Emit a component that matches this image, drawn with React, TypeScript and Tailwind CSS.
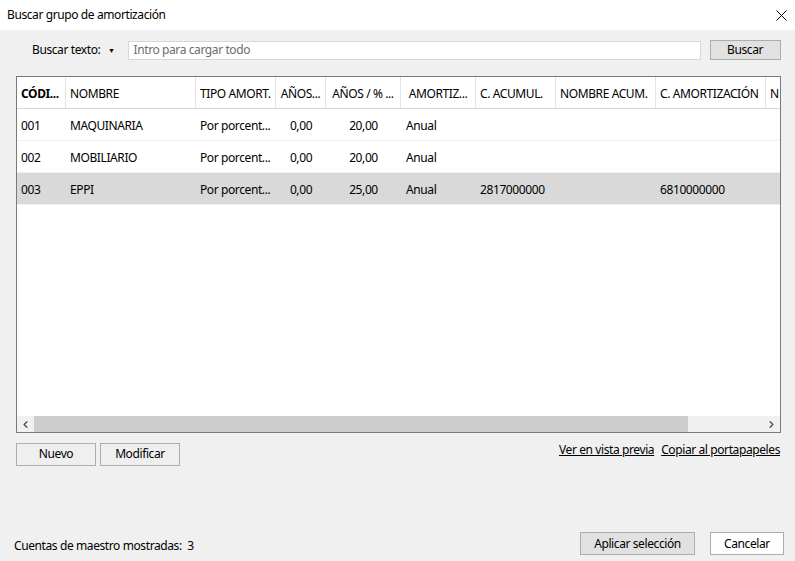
import { ChevronLeft, ChevronRight } from "lucide-react";

interface Column {
  label: string;
  width: number;
  bold?: boolean;
  align?: "left" | "center";
}

const columns: Column[] = [
  { label: "CÓDI...", width: 49, bold: true },
  { label: "NOMBRE", width: 130 },
  { label: "TIPO AMORT.", width: 80 },
  { label: "AÑOS...", width: 50, align: "center" },
  { label: "AÑOS / % ...", width: 75, align: "center" },
  { label: "AMORTIZ...", width: 75, align: "center" },
  { label: "C. ACUMUL.", width: 80 },
  { label: "NOMBRE ACUM.", width: 100 },
  { label: "C. AMORTIZACIÓN", width: 110 },
  { label: "N", width: 80 },
];

const rows = [
  ["001", "MAQUINARIA", "Por porcent...", "0,00", "20,00", "Anual", "", "", "", ""],
  ["002", "MOBILIARIO", "Por porcent...", "0,00", "20,00", "Anual", "", "", "", ""],
  ["003", "EPPI", "Por porcent...", "0,00", "25,00", "Anual", "2817000000", "", "6810000000", ""],
];

const font = { fontFamily: '"Noto Sans", "Segoe UI", sans-serif' };

function App() {
  return (
    <div
      className="w-[795px] h-[561px] flex flex-col bg-[#f0f0f0] text-[12px] text-black overflow-hidden whitespace-nowrap tracking-[-0.4px]"
      style={font}
    >
      {/* Title bar */}
      <div className="h-[30px] bg-white flex items-center justify-between pl-[7px] pr-[8px] flex-shrink-0">
        <span>Buscar grupo de amortización</span>
        <svg width="11" height="11" viewBox="0 0 11 11" className="mt-[1px]">
          <path d="M0.5 0.5 L10.5 10.5 M10.5 0.5 L0.5 10.5" stroke="#000" strokeWidth="1" />
        </svg>
      </div>

      {/* Search row */}
      <div className="flex items-center h-[20px] mt-[10px] pl-[32px] pr-[14px]">
        <span className="w-[68px]">Buscar texto:</span>
        <span className="ml-[8px] text-[7px] leading-none">▼</span>
        <div className="ml-[13px] w-[573px] h-[19px] bg-white border border-[#d7d7d7] flex items-center px-[5px] text-[#6d6d6d]">
          Intro para cargar todo
        </div>
        <button className="ml-[9px] w-[71px] h-[20px] bg-[#e1e1e1] border border-[#adadad] flex items-center justify-center">
          Buscar
        </button>
      </div>

      {/* Grid */}
      <div className="mt-[16px] ml-[16px] w-[765px] h-[357px] border border-[#7a7a7a] bg-white flex flex-col overflow-hidden">
        <div className="flex h-[32px] border-b border-[#d5d5d5] flex-shrink-0">
          {columns.map((c, i) => (
            <div
              key={i}
              className={`flex-shrink-0 h-full flex items-center px-[4px] pt-[2px] border-r border-[#e2e2e2] overflow-hidden ${c.bold ? "font-bold" : ""} ${c.align === "center" ? "justify-center" : ""}`}
              style={{ width: c.width }}
            >
              {c.label}
            </div>
          ))}
        </div>
        {rows.map((r, ri) => (
          <div
            key={ri}
            className={`flex h-[32px] flex-shrink-0 border-b border-[#f0f0f0] ${ri === 2 ? "bg-[#d9d9d9]" : ""}`}
          >
            {r.map((v, ci) => (
              <div
                key={ci}
                className={`flex-shrink-0 h-full flex items-center px-[4px] pt-[2px] overflow-hidden ${ci === 3 || ci === 4 ? "justify-center" : ""}`}
                style={{ width: columns[ci].width, paddingLeft: ci === 5 ? 5 : undefined }}
              >
                {v}
              </div>
            ))}
          </div>
        ))}
        <div className="flex-1" />
        {/* Horizontal scrollbar */}
        <div className="h-[16px] flex bg-[#f0f0f0] flex-shrink-0">
          <div className="w-[17px] h-full flex items-center justify-center">
            <ChevronLeft className="w-[11px] h-[11px] text-[#505050]" strokeWidth={3} />
          </div>
          <div className="w-[654px] h-full bg-[#cdcdcd]" />
          <div className="flex-1" />
          <div className="w-[17px] h-full flex items-center justify-center">
            <ChevronRight className="w-[11px] h-[11px] text-[#505050]" strokeWidth={3} />
          </div>
        </div>
      </div>

      {/* Actions row */}
      <div className="flex items-center mt-[10px] pl-[16px] pr-[15px] h-[22px]">
        <button className="w-[80px] h-[23px] bg-[#efefef] border border-[#adadad] flex items-center justify-center">
          Nuevo
        </button>
        <button className="ml-[4px] w-[80px] h-[23px] bg-[#efefef] border border-[#adadad] flex items-center justify-center">
          Modificar
        </button>
        <div className="flex-1" />
        <span className="underline mt-[-8px]">Ver en vista previa</span>
        <span className="ml-[7px] underline mt-[-8px]">Copiar al portapapeles</span>
      </div>

      <div className="flex-1" />

      {/* Footer */}
      <div className="flex items-center pl-[14px] pr-[11px] h-[23px] mb-[6px]">
        <span className="mt-[4px]">Cuentas de maestro mostradas:&nbsp;&nbsp;3</span>
        <div className="flex-1" />
        <button className="w-[115px] h-[23px] bg-[#e1e1e1] border border-[#adadad] flex items-center justify-center">
          Aplicar selección
        </button>
        <button className="ml-[15px] w-[74px] h-[23px] bg-[#fdfdfd] border border-[#adadad] flex items-center justify-center">
          Cancelar
        </button>
      </div>
    </div>
  );
}

export default App;
